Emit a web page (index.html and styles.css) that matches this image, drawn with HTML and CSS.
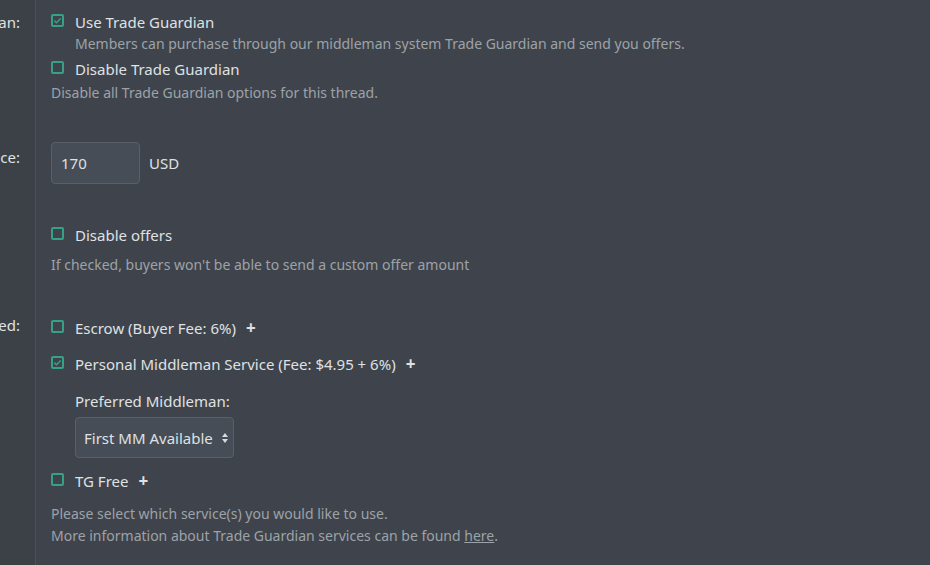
FILE: index.html
```html
<!DOCTYPE html>
<html>
<head>
<meta charset="utf-8">
<link rel="stylesheet" href="styles.css">
</head>
<body>
<div class="form">
  <div class="row row-tg">
    <div class="label"><span>Trade Guardian:</span></div>
    <div class="field">
      <label class="check"><span class="box checked"><svg viewBox="0 0 13 13"><path d="M3.3 6.6 L5.5 8.8 L9.7 4.4" /></svg></span><span class="ctext">Use Trade Guardian</span></label>
      <div class="hint indent">Members can purchase through our middleman system Trade Guardian and send you offers.</div>
      <label class="check check2"><span class="box"></span><span class="ctext">Disable Trade Guardian</span></label>
      <div class="hint hint-disable">Disable all Trade Guardian options for this thread.</div>
    </div>
  </div>

  <div class="row row-price">
    <div class="label"><span>Price:</span></div>
    <div class="field price">
      <div class="input">170</div>
      <span class="unit">USD</span>
    </div>
  </div>

  <div class="row row-offers">
    <div class="label"></div>
    <div class="field">
      <label class="check"><span class="box"></span><span class="ctext">Disable offers</span></label>
      <div class="hint hint-offers">If checked, buyers won't be able to send a custom offer amount</div>
    </div>
  </div>

  <div class="row row-services">
    <div class="label"><span>Services Accepted:</span></div>
    <div class="field">
      <label class="check"><span class="box"></span><span class="ctext">Escrow (Buyer Fee: 6%)</span><span class="plus">+</span></label>
      <label class="check check-pm"><span class="box checked"><svg viewBox="0 0 13 13"><path d="M3.3 6.6 L5.5 8.8 L9.7 4.4" /></svg></span><span class="ctext">Personal Middleman Service (Fee: $4.95 + 6%)</span><span class="plus">+</span></label>
      <div class="sub">
        <div class="sublabel">Preferred Middleman:</div>
        <div class="select"><span>First MM Available</span><svg class="arrows" viewBox="0 0 8 12"><path d="M4 1 L7 5 L1 5 Z M4 11 L7 7 L1 7 Z" /></svg></div>
      </div>
      <label class="check check-tg"><span class="box"></span><span class="ctext">TG Free</span><span class="plus">+</span></label>
      <div class="hint hint-last">Please select which service(s) you would like to use.<br>More information about Trade Guardian services can be found <a href="#">here</a>.</div>
    </div>
  </div>
</div>
</body>
</html>
```

FILE: styles.css
```css
html, body {
  margin: 0;
  padding: 0;
  background: #3f444c;
  overflow: hidden;
}
body {
  width: 930px;
  height: 565px;
  font-family: "Segoe UI", "Noto Sans", sans-serif;
  color: #dfe1e3;
  font-size: 15px;
}
.form {
  display: flex;
  flex-direction: column;
  min-height: 565px;
  background: linear-gradient(to right, #3c4148 0, #3c4148 35px, #4b5058 35px, #4b5058 36px, #3f444c 36px);
}
.row {
  display: flex;
}
.label {
  width: 35px;
  flex: none;
  display: flex;
  justify-content: flex-end;
  box-sizing: border-box;
  padding-right: 15px;
  white-space: nowrap;
  color: #dfe1e3;
  line-height: 22px;
}
.field {
  padding-left: 16px;
  flex: 1;
}
.check {
  display: flex;
  align-items: flex-start;
  line-height: 22px;
}
.box {
  width: 13px;
  height: 13px;
  box-sizing: border-box;
  border: 2px solid #36a186;
  border-radius: 2px;
  margin-top: 3px;
  margin-right: 11px;
  flex: none;
  display: flex;
}
.box svg {
  width: 13px;
  height: 13px;
  margin: -2px;
  fill: none;
  stroke: #36a186;
  stroke-width: 1.5;
}
.ctext { white-space: nowrap; }
.plus {
  font-weight: bold;
  margin-left: 10px;
  font-size: 17px;
  line-height: 22px;
}
.hint {
  color: #9da2a8;
  font-size: 14px;
  line-height: 22px;
}
.hint.indent { padding-left: 24px; }
.row-tg { padding-top: 11px; }
.check2 { margin-top: 3px; }
.hint-disable { margin-top: 2px; }
.row-price { padding-top: 38px; }
.row-price .label { padding-top: 4px; }
.price { display: flex; align-items: center; }
.input {
  width: 89px;
  height: 42px;
  box-sizing: border-box;
  border: 1px solid #5a6069;
  border-radius: 4px;
  background: #474d56;
  padding: 0 9px;
  line-height: 40px;
}
.unit { margin-left: 9px; }
.row-offers { padding-top: 40px; }
.hint-offers { margin-top: 8px; }
.row-services { padding-top: 41px; }
.row-services .label { margin-top: -3px; }
.check-pm { margin-top: 14px; }
.sub { padding-left: 24px; margin-top: 15px; }
.sublabel { line-height: 22px; }
.select {
  margin-top: 5px;
  width: 159px;
  height: 41px;
  box-sizing: border-box;
  border: 1px solid #5a6069;
  border-radius: 4px;
  background: #474d56;
  display: flex;
  align-items: center;
  justify-content: space-between;
  padding: 0 4px 0 8px;
  white-space: nowrap;
}
.arrows { width: 8px; height: 12px; fill: #d8dadc; }
.check-tg { margin-top: 12px; }
.hint-last { margin-top: 11px; }
.hint a { color: #9da2a8; }
```
